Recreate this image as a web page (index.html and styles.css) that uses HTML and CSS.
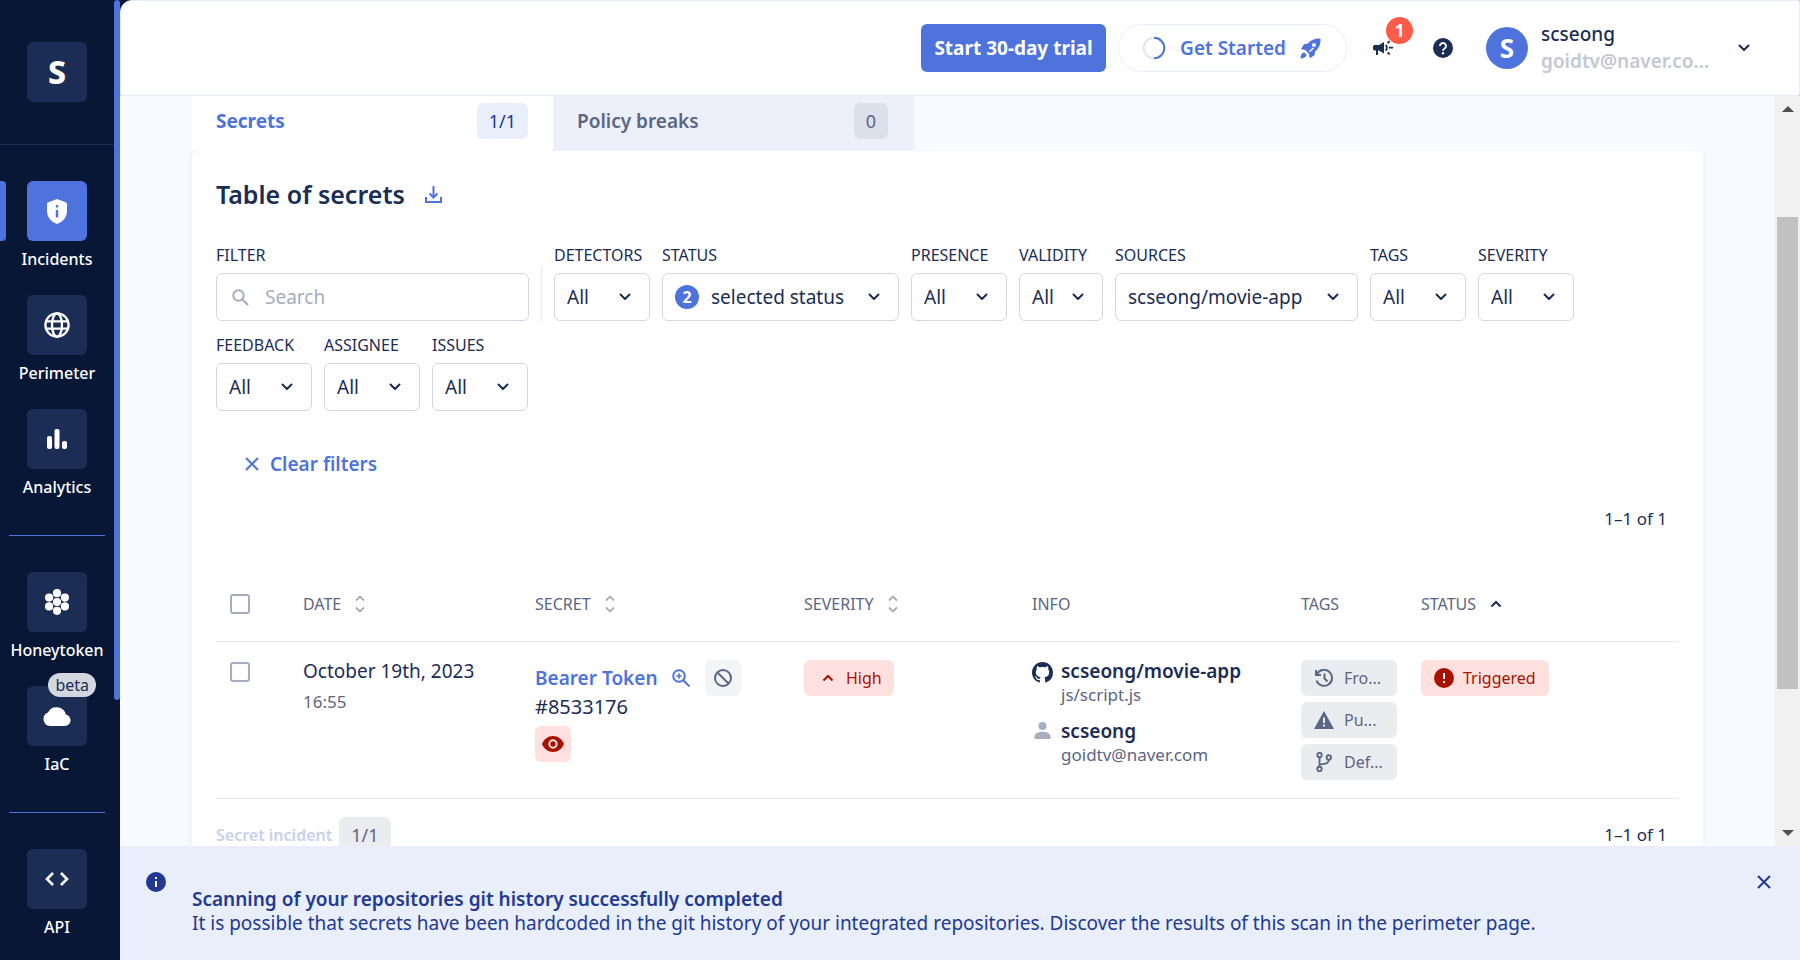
FILE: index.html
```html
<!DOCTYPE html>
<html lang="en">
<head>
<meta charset="utf-8">
<title>Incidents</title>
<link rel="stylesheet" href="styles.css">
</head>
<body>
<svg class="sprite" aria-hidden="true">
  <symbol id="chev" viewBox="0 0 12 8"><path d="M1.500 1.500 6 6l4.500-4.500" fill="none" stroke="currentColor" stroke-width="2" stroke-linecap="round" stroke-linejoin="round"/></symbol>
  <symbol id="chev-up" viewBox="0 0 12 8"><path d="M1.500 6.500 6 2l4.500 4.500" fill="none" stroke="currentColor" stroke-width="2"/></symbol>
  <symbol id="sort" viewBox="0 0 10 18"><path d="M1 5.500 5 1.500l4 4M1 12.500l4 4 4-4" fill="none" stroke="currentColor" stroke-width="1.800"/></symbol>
  <symbol id="cross" viewBox="0 0 16 16"><path d="M2 2l12 12M14 2 2 14" fill="none" stroke="currentColor" stroke-width="2"/></symbol>
</svg>
<div class="app">
  <nav class="side" aria-label="Main">
    <div class="side-top"><a class="tile logo" href="#">S</a></div>
    <ul class="side-list">
      <li class="current"><a href="#"><span class="tile"><svg width="20" height="25" viewBox="0 0 20 25"><path fill="#fff" d="M10 0 18.700 3.300Q20 4 20 5v7c0 6-4 11-10 13C4 23 0 18 0 12V5Q0 4 1.300 3.300z"/><path fill="#4e73dc" d="M8.800 6h2.400v2.600H8.800zM8.800 11h2.400v7.500H8.800z"/></svg></span>Incidents</a></li>
      <li><a href="#"><span class="tile"><svg width="26" height="26" viewBox="0 0 26 26" fill="none" stroke="#fff" stroke-width="2.300"><circle cx="13" cy="13" r="11.600"/><ellipse cx="13" cy="13" rx="5" ry="11.600"/><path d="M2 9.300h22M2 16.700h22"/></svg></span>Perimeter</a></li>
      <li><a href="#"><span class="tile"><svg width="20" height="20" viewBox="0 0 20 20" fill="#fff"><rect y="7" width="5" height="13" rx="2"/><rect x="7.500" width="5" height="20" rx="2"/><rect x="15" y="12" width="5" height="8" rx="2"/></svg></span>Analytics</a></li>
    </ul>
    <ul class="side-list">
      <li><a href="#"><span class="tile"><svg width="24" height="26" viewBox="0 0 24 26" fill="#fff"><circle cx="12" cy="13" r="4.100"/><circle cx="12" cy="4.200" r="4.100"/><circle cx="12" cy="21.800" r="4.100"/><circle cx="4.100" cy="8.600" r="4.100"/><circle cx="19.900" cy="8.600" r="4.100"/><circle cx="4.100" cy="17.400" r="4.100"/><circle cx="19.900" cy="17.400" r="4.100"/></svg></span>Honeytoken</a></li>
      <li><a href="#"><span class="tile"><svg width="28" height="20" viewBox="0 0 28 20"><path fill="#fff" d="M7 20a7 7 0 0 1-2-13.500 9.500 9.500 0 0 1 17.800 2A5.800 5.800 0 0 1 22 20z"/></svg><span class="beta">beta</span></span>IaC</a></li>
    </ul>
    <ul class="side-list">
      <li><a href="#"><span class="tile"><svg width="24" height="14" viewBox="0 0 24 14" fill="none" stroke="#fff" stroke-width="2.600"><path d="M8 1 2 7l6 6M16 1l6 6-6 6"/></svg></span>API</a></li>
    </ul>
    <div class="side-scroll"></div>
  </nav>

  <div class="page">
    <header class="top">
      <button class="btn-primary">Start 30-day trial</button>
      <button class="btn-pill">
        <svg width="24" height="24" viewBox="0 0 24 24" fill="none" stroke-width="2"><circle cx="12" cy="12" r="10.300" stroke="#e4e5e9"/><path d="M12 1.700a10.300 10.300 0 0 1 0 20.600" stroke="#4e73dc"/></svg>
        Get Started
        <svg width="21" height="21" viewBox="0 0 21 21"><path fill="#4e73dc" fill-rule="evenodd" d="M20.500.500c.400 5-1 9-4.500 12.300l-1 .900-.500 3.500-4.700 3-.900-4.400-3.700-3.700L1 11l3-4.700 3.500-.500.800-.900C11.500 1.600 15.500.100 20.500.500zM14 5a2 2 0 1 0 0 4 2 2 0 0 0 0-4zM10 14l4-3.500-1-1-4 3.500zM4.200 14.300l2.500 2.500C6 19.500 3.800 20.500.500 20.500c0-3.300 1-5.500 3.700-6.200z"/></svg>
      </button>
      <button class="icon-btn news" aria-label="News">
        <svg width="20" height="18" viewBox="0 0 20 18"><path fill="#1b2d55" d="M1.800 6H6l5-3v11.500L6 11.500h-1V16H3v-4.500H1.800A1.800 1.800 0 0 1 0 9.700V7.800A1.800 1.800 0 0 1 1.800 6z"/><path d="M12.500 6a3.400 3.400 0 0 1 0 5.500M14.500 4l2.300-1.700M16 8.700h4M14.500 13.500l2.300 1.800" stroke="#1b2d55" stroke-width="1.800" fill="none"/></svg>
        <span class="count">1</span>
      </button>
      <button class="icon-btn help" aria-label="Help"><svg width="20" height="20" viewBox="0 0 20 20"><circle cx="10" cy="10" r="10" fill="#1b2d55"/><path d="M7 8a3 3 0 1 1 4.600 2.500C10.500 11.200 10 11.600 10 12.700" fill="none" stroke="#fff" stroke-width="1.900"/><circle cx="10" cy="15.300" r="1.200" fill="#fff"/></svg></button>
      <button class="user">
        <span class="avatar">S</span>
        <span class="who"><span>scseong</span><span class="who-mail">goidtv@naver.co...</span></span>
        <svg class="chev"><use href="#chev"/></svg>
      </button>
    </header>

    <div class="view">
      <main class="content">
        <div class="tabs" role="tablist">
          <button class="tab on" role="tab" aria-selected="true">Secrets<span class="chip chip-blue">1/1</span></button>
          <button class="tab" role="tab" aria-selected="false">Policy breaks<span class="chip chip-grey">0</span></button>
        </div>
        <section class="panel">
          <div class="title-row">
            <h1>Table of secrets</h1>
            <button class="icon-btn" aria-label="Download"><svg width="17" height="17" viewBox="0 0 17 17" fill="none" stroke="#4e73dc" stroke-width="2"><path d="M8.500 0v11M4.500 7.500l4 4 4-4M1 11v5h15v-5"/></svg></button>
          </div>

          <form class="filters">
            <div class="field"><label for="q">FILTER</label><div class="box search"><svg width="17" height="17" viewBox="0 0 17 17" fill="none" stroke="#a5adbf" stroke-width="2"><circle cx="6.500" cy="6.500" r="5.200"/><path d="m10.500 10.500 5.500 5.500"/></svg><input id="q" type="text" placeholder="Search"></div></div>
            <div class="rule"></div>
            <div class="field"><label for="f1">DETECTORS</label><div class="box"><select id="f1"><option>All</option></select><svg class="chev"><use href="#chev"/></svg></div></div>
            <div class="field"><label for="f2">STATUS</label><div class="box status"><span class="num">2</span><select id="f2"><option>selected status</option></select><svg class="chev"><use href="#chev"/></svg></div></div>
            <div class="field"><label for="f3">PRESENCE</label><div class="box"><select id="f3"><option>All</option></select><svg class="chev"><use href="#chev"/></svg></div></div>
            <div class="field"><label for="f4">VALIDITY</label><div class="box narrow"><select id="f4"><option>All</option></select><svg class="chev"><use href="#chev"/></svg></div></div>
            <div class="field"><label for="f5">SOURCES</label><div class="box source"><select id="f5"><option>scseong/movie-app</option></select><svg class="chev"><use href="#chev"/></svg></div></div>
            <div class="field"><label for="f6">TAGS</label><div class="box"><select id="f6"><option>All</option></select><svg class="chev"><use href="#chev"/></svg></div></div>
            <div class="field"><label for="f7">SEVERITY</label><div class="box"><select id="f7"><option>All</option></select><svg class="chev"><use href="#chev"/></svg></div></div>
            <div class="field"><label for="f8">FEEDBACK</label><div class="box"><select id="f8"><option>All</option></select><svg class="chev"><use href="#chev"/></svg></div></div>
            <div class="field"><label for="f9">ASSIGNEE</label><div class="box"><select id="f9"><option>All</option></select><svg class="chev"><use href="#chev"/></svg></div></div>
            <div class="field"><label for="f10">ISSUES</label><div class="box"><select id="f10"><option>All</option></select><svg class="chev"><use href="#chev"/></svg></div></div>
          </form>

          <button class="clear"><svg width="16" height="16"><use href="#cross"/></svg>Clear filters</button>
          <p class="range">1–1 of 1</p>

          <table class="secrets">
            <colgroup><col class="c-check"><col class="c-date"><col class="c-secret"><col class="c-sev"><col class="c-info"><col class="c-tags"><col></colgroup>
            <thead>
              <tr>
                <th class="check"><input type="checkbox" aria-label="Select all"></th>
                <th><span class="th">DATE<svg class="sort"><use href="#sort"/></svg></span></th>
                <th><span class="th">SECRET<svg class="sort"><use href="#sort"/></svg></span></th>
                <th><span class="th">SEVERITY<svg class="sort"><use href="#sort"/></svg></span></th>
                <th>INFO</th>
                <th>TAGS</th>
                <th><span class="th">STATUS<svg class="chev"><use href="#chev-up"/></svg></span></th>
              </tr>
            </thead>
            <tbody>
              <tr>
                <td class="check"><input type="checkbox" aria-label="Select incident"></td>
                <td><div class="date">October 19th, 2023</div><div class="time">16:55</div></td>
                <td>
                  <div class="secret"><a href="#">Bearer Token</a><svg width="19" height="18" viewBox="0 0 19 18" fill="none" stroke="#4e73dc" stroke-width="2"><circle cx="7" cy="7" r="5.800"/><path d="m11.500 11.500 6 6"/><path d="M7 4.300v5.400M4.300 7h5.400" stroke-width="1.600"/></svg><span class="sq"><svg width="18" height="18" viewBox="0 0 18 18" fill="none" stroke="#5a6787" stroke-width="2"><circle cx="9" cy="9" r="8"/><path d="m3.500 3.500 11 11"/></svg></span></div>
                  <div class="ident">#8533176</div>
                  <span class="sq sq-red"><svg width="22" height="16" viewBox="0 0 22 16"><path fill="#a81100" d="M11 0c5 0 9 3.200 11 8-2 4.800-6 8-11 8S2 12.800 0 8c2-4.800 6-8 11-8z"/><circle cx="11" cy="8" r="3.700" fill="none" stroke="#fee1df" stroke-width="2"/></svg></span>
                </td>
                <td><span class="pill high"><svg class="chev"><use href="#chev-up"/></svg>High</span></td>
                <td>
                  <div class="info">
                    <svg width="21" height="21" viewBox="0 0 16 16"><path fill="#1b2d55" fill-rule="evenodd" d="M8 0C3.580 0 0 3.580 0 8c0 3.540 2.290 6.530 5.470 7.590.4.070.55-.17.55-.38 0-.19-.01-.82-.01-1.490-2.010.37-2.530-.49-2.690-.94-.09-.23-.48-.94-.82-1.130-.28-.15-.68-.52-.01-.53.63-.01 1.080.58 1.230.82.72 1.210 1.870.87 2.330.66.07-.52.28-.87.51-1.070-1.780-.2-3.640-.89-3.640-3.950 0-.87.31-1.590.82-2.150-.08-.2-.36-1.020.08-2.120 0 0 .67-.21 2.200.82.640-.18 1.320-.27 2-.27s1.360.09 2 .27c1.530-1.040 2.200-.82 2.200-.82.440 1.100.16 1.920.08 2.120.51.56.82 1.270.82 2.150 0 3.070-1.870 3.750-3.650 3.950.29.25.54.73.54 1.480 0 1.070-.01 1.930-.01 2.200 0 .21.15.46.55.38A8.010 8.010 0 0 0 16 8c0-4.420-3.580-8-8-8z"/></svg>
                    <div><div class="strong">scseong/movie-app</div><div class="sub">js/script.js</div></div>
                  </div>
                  <div class="info">
                    <svg width="21" height="17" viewBox="0 0 21 17" fill="#a5adbf"><circle cx="10.500" cy="4" r="4"/><path d="M2.500 17v-2.500c0-3 3.500-4.700 8-4.700s8 1.700 8 4.700V17z"/></svg>
                    <div><div class="strong">scseong</div><div class="sub">goidtv@naver.com</div></div>
                  </div>
                </td>
                <td>
                  <div class="tags">
                    <span class="pill tag"><svg width="20" height="18" viewBox="0 0 20 18" fill="none" stroke="#5a6787" stroke-width="2"><path d="M3 5a8 8 0 1 1-.500 6.500M2 1v5h5M10.500 4.500V9.500l3 3"/></svg>Fro...</span>
                    <span class="pill tag"><svg width="20" height="18" viewBox="0 0 20 18"><path fill="#5a6787" d="M10 0 20 18H0z"/><path d="M10 6.500v5.500M10 13.500v2" stroke="#ebecf0" stroke-width="2"/></svg>Pu...</span>
                    <span class="pill tag"><svg width="20" height="20" viewBox="0 0 20 20" fill="none" stroke="#5a6787" stroke-width="1.900"><circle cx="5.500" cy="3" r="2.200"/><circle cx="5.500" cy="17" r="2.200"/><circle cx="14.800" cy="5.500" r="2.200"/><path d="M5.500 5.300v9.500M14.800 7.800c0 4.200-4.300 4.200-9.300 4.700"/></svg>Def...</span>
                  </div>
                </td>
                <td><span class="pill trig"><svg width="20" height="20" viewBox="0 0 20 20"><circle cx="10" cy="10" r="10" fill="#a81100"/><path d="M10 5v6M10 13v2" stroke="#fff" stroke-width="2"/></svg>Triggered</span></td>
              </tr>
            </tbody>
          </table>
          <div class="foot"><span class="foot-left">Secret incident<span class="chip chip-tag">1/1</span></span><span>1–1 of 1</span></div>
        </section>
      </main>
      <div class="bar" aria-hidden="true">
        <svg width="12" height="6" viewBox="0 0 12 6"><path fill="#505050" d="M0 6 6 0l6 6z"/></svg>
        <div class="track"><div class="thumb"></div></div>
        <svg width="12" height="6" viewBox="0 0 12 6"><path fill="#505050" d="M0 0h12L6 6z"/></svg>
      </div>
    </div>

    <aside class="banner">
      <svg class="banner-icon" width="20" height="20" viewBox="0 0 20 20"><circle cx="10" cy="10" r="10" fill="#223994"/><path d="M10 5v2M10 9v6" stroke="#fff" stroke-width="2"/></svg>
      <div class="banner-text"><strong>Scanning of your repositories git history successfully completed</strong><p>It is possible that secrets have been hardcoded in the git history of your integrated repositories. Discover the results of this scan in the perimeter page.</p></div>
      <button class="icon-btn close" aria-label="Close"><svg width="16" height="16"><use href="#cross"/></svg></button>
    </aside>
  </div>
</div>
</body>
</html>
```
FILE: styles.css
```css
* { box-sizing: border-box; }
body { margin: 0; font-family: "Noto Sans", "Open Sans", sans-serif; font-size: 19px; line-height: 24px; color: #1b2d55; }
button, input, select { font: inherit; color: inherit; }
button { border: 0; padding: 0; background: none; cursor: pointer; }
a { color: inherit; text-decoration: none; }
p, h1, ul { margin: 0; padding: 0; }
svg { flex: none; }
.sprite { display: none; }
.chev { width: 12px; height: 8px; }

.app { display: flex; height: 100vh; overflow: hidden; background: #081735; }

/* Sidebar */
.side { position: relative; width: 120px; flex: none; padding-right: 6px; color: #fff; overflow: hidden; }
.side-top { display: flex; justify-content: center; padding: 42px 0; border-bottom: 1px solid #1b2d55; }
.tile { position: relative; display: flex; align-items: center; justify-content: center; width: 60px; height: 60px; border-radius: 6px; background: #1b2d55; }
.logo { font-size: 32px; font-weight: 800; }
.side-list { list-style: none; margin: 0 9px; padding: 36px 0; display: flex; flex-direction: column; gap: 24px; }
.side-list + .side-list { border-top: 1px solid #4e73dc; }
.side-list a { display: flex; flex-direction: column; align-items: center; gap: 6px; font-size: 16px; font-weight: 500; white-space: nowrap; }
.side-list li { position: relative; }
.current .tile { background: #4e73dc; }
.current::before { content: ""; position: absolute; left: -9px; top: 0; width: 6px; height: 60px; background: #4e73dc; border-radius: 0 4px 4px 0; }
.beta { position: absolute; right: -9px; top: -13px; padding: 0 7px; border-radius: 12px; background: #d3d7e0; color: #1b2d55; font-size: 16px; font-weight: 400; }
.side-scroll { position: absolute; right: 0; top: 0; width: 6px; height: 700px; border-radius: 3px; background: #4e73dc; }

/* Header */
.page { flex: 1; min-width: 0; display: flex; flex-direction: column; }
.top { height: 96px; flex: none; display: flex; align-items: center; justify-content: flex-end; padding-right: 49px; background: #fff; border: 1px solid #e7edfa; border-radius: 12px 0 0 0; }
.btn-primary { height: 48px; width: 185px; border-radius: 6px; background: #4e73dc; color: #fff; font-weight: 700; white-space: nowrap; }
.btn-pill { display: flex; align-items: center; justify-content: space-between; width: 229px; height: 48px; margin-left: 12px; padding: 0 25px 0 23px; border: 1px solid #e7edfa; border-radius: 24px; color: #4e73dc; font-weight: 600; }
.icon-btn { display: flex; align-items: center; }
.news { position: relative; margin-left: 26px; }
.count { position: absolute; left: 13px; top: -22px; width: 27px; height: 27px; border-radius: 50%; background: #ff5c47; color: #fff; font-size: 17px; font-weight: 700; line-height: 27px; }
.help { margin-left: 40px; }
.user { display: flex; align-items: center; margin-left: 33px; text-align: left; }
.avatar { width: 42px; height: 42px; border-radius: 50%; background: #4e73dc; color: #fff; font-size: 26px; font-weight: 700; line-height: 42px; text-align: center; }
.who { display: flex; flex-direction: column; width: 172px; margin: 0 25px 0 13px; line-height: 27px; font-weight: 500; white-space: nowrap; }
.who-mail { color: #c2c8d4; font-weight: 600; }

/* Content */
.view { flex: 1; min-height: 0; display: flex; background: #f7faff; overflow: hidden; }
.content { flex: 1; min-width: 0; padding: 0 72px; overflow: hidden; }
.tabs { display: flex; }
.tab { display: flex; align-items: center; justify-content: space-between; width: 361px; height: 55px; padding: 0 26px 5px 24px; background: #edf0f8; color: #5b6584; font-weight: 600; }
.tab.on { background: #fff; color: #4e73dc; padding-right: 25px; font-weight: 700; }
.chip { display: inline-flex; align-items: center; height: 36px; padding: 0 12px; border-radius: 6px; font-size: 18px; font-weight: 400; }
.chip-blue { background: #e8eefa; color: #223994; }
.chip-grey { background: #dce0ea; color: #5b6584; }
.chip-tag { background: #ebecf0; color: #5b6584; }
.panel { padding: 24px; background: #fff; box-shadow: 0 0 6px #e7edfa; clip-path: inset(0 -8px); border-radius: 6px; }
.title-row { display: flex; align-items: center; gap: 20px; margin-bottom: 30px; }
h1 { font-size: 25px; line-height: 38px; font-weight: 600; }

.filters { display: flex; flex-wrap: wrap; align-items: flex-end; gap: 12px; }
.rule { width: 1px; height: 54px; background: #e4e7ee; }
.field { display: flex; flex-direction: column; gap: 6px; }
.field label { width: 0; font-size: 16px; white-space: nowrap; }
.box { position: relative; display: flex; align-items: center; width: 96px; height: 48px; border: 1px solid #d3d7e2; border-radius: 6px; background: #fff; }
.box select { flex: 1; min-width: 0; height: 46px; border: 0; padding: 0 30px 0 12px; background: transparent; appearance: none; outline: 0; }
.box .chev { position: absolute; right: 18px; pointer-events: none; }
.status { width: 237px; padding-left: 12px; }
.narrow { width: 84px; }
.source { width: 243px; }
.num { width: 24px; height: 24px; border-radius: 50%; background: #4e73dc; color: #fff; font-size: 16px; font-weight: 700; text-align: center; }
.search { width: 313px; padding-left: 15px; gap: 16px; }
.search input { flex: 1; min-width: 0; border: 0; padding: 0; outline: 0; background: transparent; }
.search input::placeholder { color: #a5adbf; }
.clear { display: flex; align-items: center; gap: 10px; height: 48px; margin: 29px 0 19px; padding: 0 28px; color: #4e73dc; font-weight: 600; }
.range { padding-right: 12px; margin-bottom: 36px; font-size: 17px; text-align: right; }

/* Table */
.secrets { width: 100%; border-collapse: collapse; table-layout: fixed; }
.c-check { width: 87px; }
.c-date { width: 232px; }
.c-secret { width: 269px; }
.c-sev { width: 228px; }
.c-info { width: 269px; }
.c-tags { width: 120px; }
th { height: 74px; padding: 0; text-align: left; font-size: 16px; font-weight: 400; color: #5b6584; border-bottom: 1px solid #e6e8ec; }
td { padding: 18px 0; vertical-align: top; border-bottom: 1px solid #e6e8ec; }
.th { display: flex; align-items: center; gap: 14px; }
.th .chev { color: #1b2d55; }
.sort { width: 10px; height: 18px; color: #a5adbf; }
.check { padding-left: 14px; }
.check input { display: block; appearance: none; width: 20px; height: 20px; margin: 0; border: 2px solid #a5adbf; border-radius: 3px; background: #fff; }
td.check { padding-top: 20px; }
.date { line-height: 22px; }
.time { margin-top: 8px; font-size: 17px; color: #5b6584; }
.secret { display: flex; align-items: center; gap: 14px; height: 36px; color: #4e73dc; font-weight: 600; white-space: nowrap; }
.ident { line-height: 22px; margin-bottom: 8px; font-size: 20px; }
.sq { display: flex; align-items: center; justify-content: center; width: 36px; height: 36px; border-radius: 6px; background: #f2f4f7; }
.sq-red { background: #fee1df; }
.pill { display: inline-flex; align-items: center; height: 36px; padding: 0 12px; border-radius: 6px; font-size: 16px; white-space: nowrap; }
.high, .trig { background: #fee1df; color: #a81100; }
.high { gap: 12px; padding-left: 18px; }
.trig { gap: 9px; padding: 0 13px; }
.info { display: flex; gap: 8px; margin-bottom: 12px; }
.info svg { margin-top: 2px; }
.info:last-child { margin-bottom: 0; }
.strong { font-weight: 600; line-height: 22px; }
.sub { font-size: 17px; line-height: 26px; color: #5b6584; }
.tags { display: flex; flex-direction: column; gap: 6px; width: 96px; }
.tag { gap: 10px; padding: 0 13px; background: #ebecf0; color: #5b6584; }
.foot { display: flex; align-items: center; justify-content: space-between; padding: 18px 12px 18px 0; font-size: 17px; }
.foot-left { display: flex; align-items: center; gap: 7px; color: #c6d1ea; font-size: 16px; font-weight: 600; }

/* Scroll bar */
.bar { width: 25px; flex: none; display: flex; flex-direction: column; align-items: center; padding: 10px 0; background: #f1f1f1; }
.track { flex: 1; width: 21px; padding-top: 105px; }
.thumb { height: 77%; background: #c1c1c1; }

/* Banner */
.banner { flex: none; display: flex; padding: 24px 28px 0 26px; background: #e8eefa; color: #223994; }
.banner-icon { margin-top: 2px; }
.banner-text { flex: 1; padding: 17px 0 25px; margin-left: 26px; }
.banner-text strong { display: block; font-weight: 600; }
.close { align-self: flex-start; height: 24px; }
```
